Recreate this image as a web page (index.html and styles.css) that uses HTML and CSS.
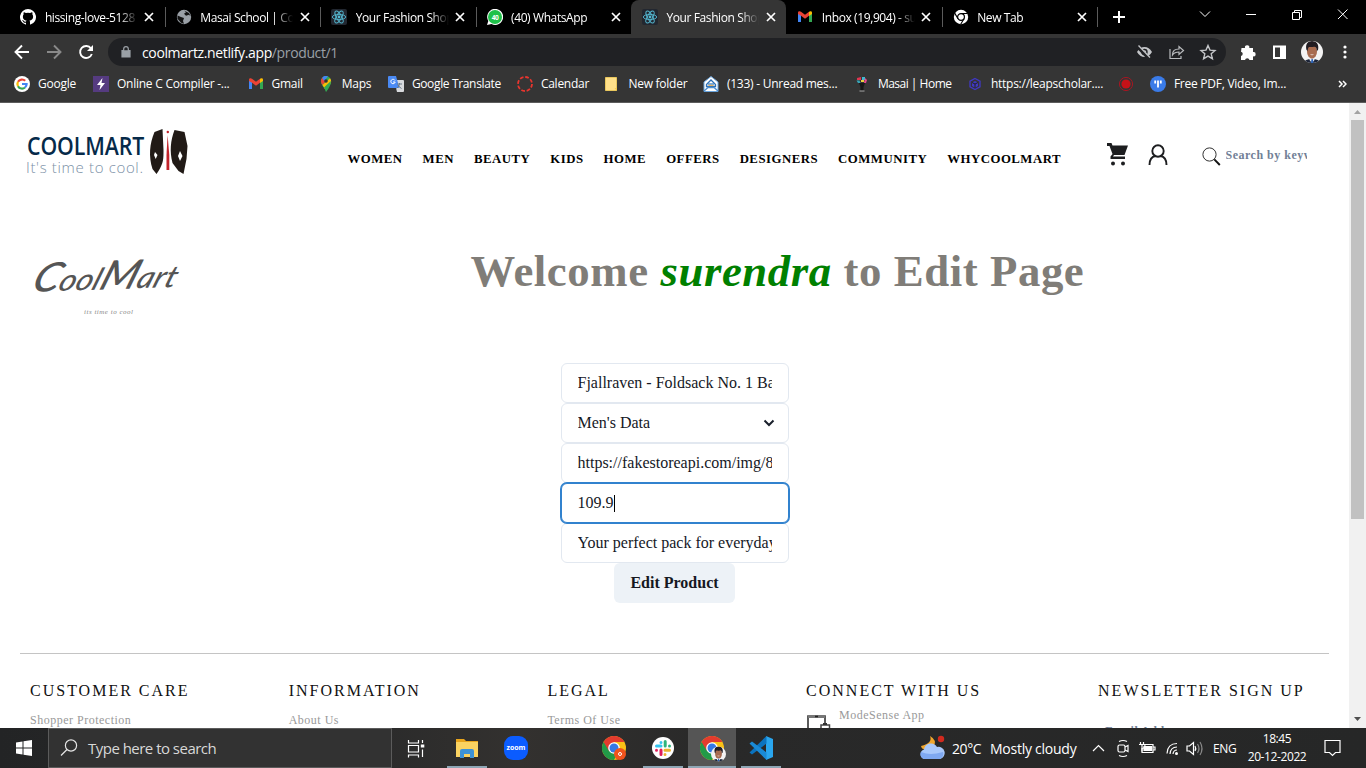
FILE: index.html
```html
<!DOCTYPE html>
<html lang="en">
<head>
<meta charset="utf-8">
<title>Your Fashion Shop</title>
<link rel="stylesheet" href="styles.css">
</head>
<body>
<svg class="defs" width="0" height="0">
  <symbol id="x" viewBox="0 0 10 10"><path d="M1 1l8 8M9 1L1 9" fill="none" stroke="#fff" stroke-width="1.7"/></symbol>
  <symbol id="react" viewBox="0 0 16 16"><rect width="16" height="16" rx="2" fill="#222730"/><g fill="none" stroke="#55b9d2" stroke-width=".9"><ellipse cx="8" cy="8" rx="6.7" ry="2.6"/><ellipse cx="8" cy="8" rx="6.7" ry="2.6" transform="rotate(60 8 8)"/><ellipse cx="8" cy="8" rx="6.7" ry="2.6" transform="rotate(120 8 8)"/></g><circle cx="8" cy="8" r="1.4" fill="#55b9d2"/></symbol>
  <symbol id="gmail" viewBox="0 0 16 16"><path d="M1 3.5V13h3V6z" fill="#4285f4"/><path d="M15 3.5V13h-3V6z" fill="#34a853"/><path d="M1 5V3.7C1 2 3 1.8 4 2.7l4 3 4-3v4L8 9.8 4 6.7 1 5z" fill="#ea4335"/><path d="M12 2.7c1-.9 3-.7 3 1V5l-3 2z" fill="#fbbc04"/></symbol>
  <symbol id="chrome" viewBox="0 0 24 24"><circle cx="12" cy="12" r="12" fill="#fbc116"/><path d="M12 12L1.6 6A12 12 0 0 0 12 24l5-9z" fill="#229a48"/><path d="M1.6 6A12 12 0 0 1 22.4 6H12L7 15z" fill="#e33b2e"/><circle cx="12" cy="12" r="5.8" fill="#fff"/><circle cx="12" cy="12" r="4.5" fill="#3578e5"/></symbol>
  <symbol id="face" viewBox="0 0 22 22"><clipPath id="fc"><circle cx="11" cy="11" r="11"/></clipPath><g clip-path="url(#fc)"><rect width="22" height="22" fill="#f4f3f3"/><path d="M2 22q2-4 9-4t9 4z" fill="#1c2438"/><path d="M8.500 15h5v4l-2.500 3-2.500-3z" fill="#e9eef5"/><ellipse cx="11" cy="10.500" rx="5" ry="7.200" fill="#a86b4f"/><path d="M5.500 9C4 3 7 0 11 0s7.500 3 6 9l-1.200 1c0-3-1-4.500-2.800-4.300-2.500.8-4.200 0-5 .3-1 1-1.200 2-1.200 4z" fill="#211c22"/><path d="M9 13.500q2 1.500 4 0" fill="#fff"/><path d="M10.500 18h1.300l.6 4h-2.500z" fill="#2b62b5"/></g></symbol>
</svg>

<header class="tabs">
  <div class="tab"><svg class="fav" viewBox="0 0 16 16"><path fill="#fff" d="M8 0a8 8 0 0 0-2.500 15.600c.4.1.5-.2.500-.4V13.700c-2.200.5-2.700-1-2.700-1-.4-.9-.9-1.200-.9-1.200-.7-.5.100-.5.100-.5.800.1 1.200.8 1.200.8.7 1.300 1.900.9 2.300.7.100-.5.300-.9.500-1.100-1.800-.2-3.600-.9-3.600-4 0-.9.300-1.600.8-2.100-.1-.2-.4-1 .1-2.100 0 0 .7-.2 2.200.8a7.500 7.500 0 0 1 4 0c1.500-1 2.200-.8 2.200-.8.500 1.100.2 1.900.1 2.100.5.500.8 1.200.8 2.100 0 3.100-1.900 3.800-3.700 4 .3.300.6.800.6 1.500v2.300c0 .2.100.5.500.4A8 8 0 0 0 8 0z"/></svg><span class="tt">hissing-love-5128</span><svg class="tx"><use href="#x"/></svg></div>
  <div class="tab"><svg class="fav" viewBox="0 0 16 16"><circle cx="8" cy="8" r="7.200" fill="#9aa0a6"/><path d="M1.500 6.500L5 8l3 1-1 3 1 2.800-3-1-3.500-4zM8 1.500l2 1.700-2 1.500 2 2 3-1 1.600 1.500L13 4z" fill="#111"/></svg><span class="tt">Masai School | Coo</span><svg class="tx"><use href="#x"/></svg></div>
  <div class="tab"><svg class="fav"><use href="#react"/></svg><span class="tt">Your Fashion Shop</span><svg class="tx"><use href="#x"/></svg></div>
  <div class="tab nosep"><svg class="fav" viewBox="0 0 16 16"><path d="M0 16l1.300-4A8 8 0 1 1 4.500 15z" fill="#fff"/><circle cx="8" cy="8" r="7" fill="#1fc14a"/><text x="8" y="10.700" text-anchor="middle" class="wa">40</text></svg><span class="tt">(40) WhatsApp</span><svg class="tx"><use href="#x"/></svg></div>
  <div class="tab active"><svg class="fav"><use href="#react"/></svg><span class="tt">Your Fashion Shop</span><svg class="tx"><use href="#x"/></svg></div>
  <div class="tab"><svg class="fav"><use href="#gmail"/></svg><span class="tt">Inbox (19,904) - su</span><svg class="tx"><use href="#x"/></svg></div>
  <div class="tab"><svg class="fav" viewBox="0 0 16 16"><circle cx="8" cy="8" r="7.200" fill="#fff"/><circle cx="8" cy="8" r="3.400" fill="none" stroke="#000" stroke-width="1.200"/><path d="M8 4.500h6.600M5 9.700L1.700 4.100M11 9.800l-3.300 5.500" stroke="#000" stroke-width="1.100"/></svg><span class="tt">New Tab</span><svg class="tx"><use href="#x"/></svg></div>
  <svg class="plus" viewBox="0 0 12 12"><path d="M6 0v12M0 6h12" stroke="#fff" stroke-width="2"/></svg>
  <svg class="winctl" width="150" height="20" viewBox="0 0 150 20"><g fill="none" stroke="#fff"><path d="M4 7.500l5 5 5-5M50 10.500h10M96.500 8.500h7v7h-7zM98.500 8.500v-2h7v7h-2M142 5.500l9.500 9.500M151.500 5.500L142 15" /></g></svg>
</header>

<div class="toolbar">
  <svg class="navs" width="94" height="28" viewBox="0 0 94 28"><g fill="none" stroke="#fff" stroke-width="1.900"><path d="M29 14H16M22 7.500L15.500 14l6.500 6.500"/><path d="M47 14h13M54 7.500l6.500 6.500-6.500 6.500" stroke="#8a8a8a"/><path d="M91 10.500A6 6 0 1 0 91.800 16"/></g><path d="M93 7v6h-6z" fill="#fff"/></svg>
  <div class="omni">
    <svg width="10" height="12" viewBox="0 0 10 12"><path d="M1 4.500h8V11H1zM2.700 5V3a2.300 2.300 0 0 1 4.600 0v2" fill="#9aa0a6" stroke="#9aa0a6" stroke-width="1.200"/><path d="M3.300 4.300V3a1.700 1.700 0 0 1 3.400 0v1.300" fill="#202124"/></svg>
    <span class="url">coolmartz.netlify.app<i>/product/1</i></span>
    <svg class="omico" width="84" height="18" viewBox="0 0 84 18"><path d="M2 9q3-5 7.500-5T17 9q-3 5-7.500 5T2 9z" fill="#c4c6c9"/><circle cx="9.500" cy="9" r="3.200" fill="#202124"/><circle cx="9.500" cy="9" r="1.700" fill="#c4c6c9"/><path d="M2.500 3.500L14 15.500" stroke="#202124" stroke-width="3.500"/><path d="M3.500 2.500L15 14.500" stroke="#c4c6c9" stroke-width="1.300"/><g fill="none" stroke="#b9bbbe" stroke-width="1.200"><path d="M35 6v9.500h11V13"/><path d="M37.500 12q0-6 6.500-6V3.500l4.500 4-4.500 4V9q-4.500 0-6.500 3z"/></g><path d="M73 2.500l2 4.600 5 .4-3.800 3.300 1.200 4.900-4.400-2.600-4.400 2.600 1.200-4.900L66 7.500l5-.4z" fill="none" stroke="#c4c6c9" stroke-width="1.400"/></svg>
  </div>
  <svg width="44" height="18" viewBox="0 0 44 18" class="exts"><path d="M1.500 5H5a2.200 2.200 0 1 1 4.300 0H13v4a2.200 2.200 0 1 1 0 4.300V17H9.500a2.300 2.300 0 0 0-4.500 0H1v-4a2.200 2.200 0 0 0 0-4.300z" fill="#fff"/><path d="M34 3.500h11v11.500H34z" fill="none" stroke="#fff" stroke-width="2"/><path d="M40 3h5v12h-5z" fill="#fff"/></svg>
  <svg class="ava"><use href="#face"/></svg>
  <svg class="dots" width="4" height="14" viewBox="0 0 4 14"><g fill="#fff"><circle cx="2" cy="2" r="1.600"/><circle cx="2" cy="7" r="1.600"/><circle cx="2" cy="12" r="1.600"/></g></svg>
</div>

<div class="marks">
  <a class="w79"><svg viewBox="0 0 16 16"><circle cx="8" cy="8" r="8" fill="#fff"/><g fill="none" stroke-width="2.200"><path d="M11.200 4.800A4.600 4.600 0 0 0 4 5.800" stroke="#ea4335"/><path d="M4 5.800a4.600 4.600 0 0 0 0 4.400" stroke="#fbbc04"/><path d="M4 10.200a4.600 4.600 0 0 0 7 1.300" stroke="#34a853"/><path d="M11 11.500A4.600 4.600 0 0 0 12.600 8H8" stroke="#4285f4"/></g></svg>Google</a>
  <a class="w155"><svg viewBox="0 0 16 16"><rect width="16" height="16" fill="#553b80"/><path d="M9.500 2L4 9h3.500l-1 5L12 7H8.500z" fill="#fff"/></svg>Online C Compiler -...</a>
  <a class="w70"><svg><use href="#gmail"/></svg>Gmail</a>
  <a class="w70"><svg viewBox="0 0 16 16"><path d="M8 16C7.500 12 3 10 3 5a5 5 0 0 1 10 0c0 5-4.500 7-5 11z" fill="#34a853"/><path d="M3 5.500A5 5 0 0 1 4.200 1.700L8 5 4.500 9A6 6 0 0 1 3 5.500z" fill="#ea4335"/><path d="M4.200 1.700A5 5 0 0 1 10 .4L6 5z" fill="#4285f4"/><path d="M4.500 9L12 2.200a5 5 0 0 1 0 6L7 13z" fill="#fbbc04"/><path d="M8.500 9L13 5q0 5-5 11-.5-2.500-2-4.500z" fill="#34a853"/><circle cx="8" cy="5" r="1.800" fill="#333"/></svg>Maps</a>
  <a class="w129 tight"><svg viewBox="0 0 16 16"><path d="M6 4h9q1 0 1 1v10q0 1-1 1H9z" fill="#d8dadd"/><path d="M1 0h7l3.500 12H1q-1 0-1-1V1q0-1 1-1z" fill="#4a8af4"/><path d="M9 8h5M11.500 7v1q0 2-3 4.500M10 9q1 2 3.500 3.500" stroke="#6b7b88" fill="none"/><path d="M7 4.500A2.200 2.200 0 1 0 7.200 6H5" stroke="#fff" fill="none"/></svg>Google Translate</a>
  <a class="w88"><svg viewBox="0 0 16 16"><circle cx="8" cy="8" r="7" fill="none" stroke="#e8352e" stroke-width="1.800" stroke-dasharray="3.700 1.800"/></svg>Calendar</a>
  <a class="w98"><svg viewBox="0 0 16 16"><path d="M1.500 1.500h11v13h-11z" fill="#ffe08a" stroke="#e9c75d"/><path d="M10.500 12h2.500v3" fill="#f6c84c"/></svg>New folder</a>
  <a class="w151"><svg viewBox="0 0 16 16"><path d="M1 6l7-5.500L15 6v9.500H1z" fill="#fff" stroke="#6aa4dc"/><path d="M3.500 8.500L8 4l4.500 4.500v2h-9z" fill="#fff" stroke="#2d6fb5" stroke-width="1.300"/><path d="M5 8h6M1 15l4-3.500h6L15 15" stroke="#4c8ed0" fill="none" stroke-width="1.300"/><path d="M5.500 9.300h5" stroke="#eda63b"/></svg>(133) - Unread mes...</a>
  <a class="w113 tighter"><svg viewBox="0 0 16 16"><path d="M5 7h6l-1.500 4v4h-3v-4z" fill="#171717"/><path d="M3 2l4-1v3H3z" fill="#df3550"/><path d="M8 1h3v3H8z" fill="#42b6cf"/><path d="M11 2l2 2-1 3h-2z" fill="#e4488a"/><path d="M2.500 4.500h3l1 2.500H4z" fill="#37a6b8"/><path d="M7 4h3v2H7z" fill="#e8d33e"/><path d="M5.500 15h5" stroke="#aaa"/></svg>Masai | Home</a>
  <a class="w151"><svg viewBox="0 0 16 16"><path d="M8 2.500l5 2.700v5.600L8 13.500l-5-2.700V5.200z" fill="none" stroke="#4038c4" stroke-width="1.300"/><path d="M8 5l3 1.500v3.500L8 11.800 5 10V6.500z" fill="#4038c4"/><path d="M8 8l3-1.500M8 8L5 6.500M8 8v4" stroke="#222"/></svg>https://leapscholar....</a>
  <a class="w32"><svg viewBox="0 0 16 16"><circle cx="8" cy="8" r="6.600" fill="none" stroke="#a51622"/><circle cx="8" cy="8" r="4.600" fill="#c61118"/></svg></a>
  <a class="w187"><svg viewBox="0 0 16 16"><circle cx="8" cy="8" r="8" fill="#3a7be8"/><path d="M5.200 4.500v3M10.800 4.500v3M8 4.500v7" stroke="#fff" stroke-width="1.800"/></svg>Free PDF, Video, Im...</a>
  <svg class="more" viewBox="0 0 9 8"><path d="M1 1l3 3-3 3M5 1l3 3-3 3" fill="none" stroke="#fff" stroke-width="1.500"/></svg>
</div>

<main class="view">
  <div class="page">
    <nav class="nav">
      <svg class="logo" width="164" height="50" viewBox="0 0 164 50"><text class="brand" transform="translate(2 27.500) scale(.82 1)" textLength="143">COOLMART</text><text class="tag" x="1" y="46" textLength="117">It's time to cool.</text><path d="M137.500 2l-8 3c-5 12-6 24-2 37l4 5 2-3c5-8 5-12 5-21zM149.500 3l10 2 3 14-1 13-3 15-5-3-6-8c-3-12-2-22 2-33z" fill="#211a16"/><path d="M130 25l2.500 3-1.800 4-1.700-4zM155 24l2.500 5-2.500 5-2-5z" fill="#fff"/><path d="M142.600 8l-1.100 20v15h2.800V28z" fill="#c2232a"/><circle cx="142.800" cy="5" r="1.200" fill="#c2232a"/></svg>
      <div class="links"><a>WOMEN</a><a>MEN</a><a>BEAUTY</a><a>KIDS</a><a>HOME</a><a>OFFERS</a><a>DESIGNERS</a><a>COMMUNITY</a><a>WHYCOOLMART</a></div>
      <svg class="cart" width="22" height="23" viewBox="0 0 22 23"><path d="M0 0h4.500l1 2.500H21L17.500 12H7l-1 1.500h12V16H3.500v-2.500L5.500 11 2.500 3H0z" fill="#1d1e20"/><circle cx="6" cy="20.500" r="2" fill="#1d1e20"/><circle cx="16" cy="20.500" r="2" fill="#1d1e20"/></svg>
      <svg class="user" width="20" height="22" viewBox="0 0 20 22"><g fill="none" stroke="#1d1e20" stroke-width="1.900"><circle cx="10" cy="7" r="5.700"/><path d="M1.500 21q0-8 6-9M18.500 21q0-8-6-9"/></g></svg>
      <svg class="mag" width="19" height="19" viewBox="0 0 19 19"><circle cx="7.500" cy="7.500" r="6.600" fill="none" stroke="#333"/><path d="M12.300 12.300l5.500 5.700" stroke="#111" stroke-width="1.900"/></svg>
      <div class="search">Search by keyword</div>
    </nav>
    <section class="hero">
      <svg width="160" height="70" viewBox="0 0 160 70"><text class="script" transform="translate(5 38) rotate(-2) skewX(-22)" textLength="144" lengthAdjust="spacingAndGlyphs"><tspan class="cap">C</tspan>ool<tspan class="cap">M</tspan>art</text><text class="mini" x="59" y="60" textLength="49">its time to cool</text></svg>
      <h1>Welcome <em>surendra</em> to Edit Page</h1>
    </section>
    <form class="form">
      <div class="field"><span>Fjallraven - Foldsack No. 1 Backpack</span></div>
      <div class="field"><span>Men's Data</span><svg width="12" height="8" viewBox="0 0 12 8"><path d="M1.500 1.500L6 6l4.500-4.500" fill="none" stroke="#1a202c" stroke-width="2"/></svg></div>
      <div class="field"><span>https://fakestoreapi.com/img/81fPKd</span></div>
      <div class="field focus"><span>109.9</span><b class="caret"></b></div>
      <div class="field"><span>Your perfect pack for everyday use</span></div>
      <div class="btn">Edit Product</div>
    </form>
    <footer class="foot">
      <div class="c1"><h2>CUSTOMER CARE</h2><p>Shopper Protection</p></div>
      <div class="c1"><h2>INFORMATION</h2><p>About Us</p></div>
      <div class="c1"><h2>LEGAL</h2><p>Terms Of Use</p></div>
      <div class="c4"><h2>CONNECT WITH US</h2><div class="app"><svg width="25" height="28" viewBox="0 0 25 28"><path d="M2 27V2h17v8" fill="none" stroke="#333" stroke-width="1.600"/><path d="M2 2.500h17" stroke="#777" stroke-width="3"/><path d="M9 2.500h3" stroke="#222" stroke-width="1.600"/><path d="M15 27V11h8.500v16" fill="none" stroke="#444" stroke-width="1.500"/><path d="M17 10h4" stroke="#333" stroke-width="2"/></svg><p>ModeSense App</p></div></div>
      <div class="c5"><h2>NEWSLETTER SIGN UP</h2><div class="mail">Email Address</div></div>
    </footer>
  </div>
  <div class="bar"><svg viewBox="0 0 17 17"><path d="M5 11l3.500-4 3.500 4z" fill="#a3a3a3"/></svg><div class="thumb"></div><svg viewBox="0 0 17 17"><path d="M5 6l3.500 4L12 6z" fill="#505050"/></svg></div>
</main>

<div class="task">
  <svg class="start" width="48" height="40" viewBox="0 0 48 40"><path d="M16 14.500l6.500-1v6H16zM23.500 13.300l8.500-1.300v7.500h-8.500zM16 20.500h6.500v6l-6.500-1zM23.500 20.500H32V28l-8.500-1.300z" fill="#fff"/></svg>
  <div class="find"><svg width="18" height="18" viewBox="0 0 18 18"><circle cx="11" cy="6.500" r="5.600" fill="none" stroke="#e5e5e5" stroke-width="1.200"/><path d="M7 10.500L1 16.500" stroke="#e5e5e5" stroke-width="1.300"/></svg>Type here to search</div>
  <svg class="tv" width="48" height="40" viewBox="0 0 48 40"><g fill="none" stroke="#fff" stroke-width="1.200"><path d="M16.500 12v3h10v-3M16.500 17.500h10v6.500h-10zM16.500 29.500V27h10v2.500M30.500 12v3M30.500 21.500V29"/><path d="M28.800 18h3.500" stroke-width="3"/></g></svg>
  <div class="app2 on a1"><svg viewBox="0 0 24 24"><path d="M1 3h8l2 2h12v16H1z" fill="#e9a51c"/><path d="M1 6h22v15H1z" fill="#fbd361"/><path d="M5 22v-7q0-2 2-2h10q2 0 2 2v7h-4v-4H9v4z" fill="#3d92d6"/></svg></div>
  <div class="app2 a2"><svg viewBox="0 0 24 24"><rect width="24" height="24" rx="9" fill="#0b5cff"/><text x="12" y="14" text-anchor="middle" class="zoom">zoom</text></svg></div>
  <div class="app2 a3"><svg viewBox="0 0 24 24"><use href="#chrome"/><circle cx="18" cy="18" r="6" fill="#f0531d"/><circle cx="18" cy="18" r="1.500" fill="none" stroke="#fff"/></svg></div>
  <div class="app2 on a4"><svg viewBox="0 0 24 24"><circle cx="12" cy="12" r="11" fill="#fff"/><g stroke-width="3" stroke-linecap="round"><path d="M10 6.500v0M5.500 10H10" stroke="#36c5f0"/><path d="M14.200 5.500V10M18.500 10h0" stroke="#2eb67d"/><path d="M14 14.200h4.500M14 18.500v0" stroke="#ecb22e"/><path d="M10 14v4.500M5.500 14.200h0" stroke="#e01e5a"/></g></svg></div>
  <div class="app2 on a5"><svg viewBox="0 0 24 24" overflow="visible"><use href="#chrome"/><use href="#face" x="11" y="10" width="15" height="16"/></svg></div>
  <div class="app2 on a6"><svg viewBox="0 0 24 24"><path d="M17 0l7 3v18l-7 3z" fill="#2aa6ee"/><path d="M17.500 0v7.500L3 18.500.5 16.500z" fill="#0b73bf"/><path d="M17.500 24v-7.500L3 5.500.5 7.500z" fill="#1a8ad6"/></svg></div>
  <svg class="wx" width="26" height="26" viewBox="0 0 26 26"><path d="M11 1q3 7-9 10 1 4 5 3l8-3q3-6-4-10z" fill="#f1a72d"/><circle cx="22" cy="4" r="3.200" fill="#d12a1e"/><path d="M5 24a5 5 0 0 1 0-9.500 7 7 0 0 1 13-2.500 5.500 5.500 0 0 1 3 12z" fill="#a9c8fa"/><path d="M5 24a5 5 0 0 1-3-7q5 2 10 2t12-2a5.500 5.500 0 0 1-3 7z" fill="#7fa8f0"/></svg>
  <span class="deg">20°C</span><span class="cloud">Mostly cloudy</span>
  <svg class="tray" width="114" height="24" viewBox="0 0 114 24"><g fill="none" stroke="#fff" stroke-width="1.200"><path d="M1 15l5.500-5.500L12 15"/><rect x="26" y="9" width="7" height="7" rx="1.500"/><path d="M33 11l3-1.500v6L33 14M27 5.500q4-2 8 0M27 19.500q4 2 8 0"/><path d="M50 8.500h11v8H50z"/><path d="M52 10.500h7.500v4H52z" fill="#fff"/><path d="M61 11h2v3h-2M48.500 9V6M51.500 9V6M47 8.500h6q0 4-3 4v3"/><path d="M75 17.500q.5-10 10-10M78 18q.5-7 7-7M81 18q.5-4 4-4"/><path d="M95 10h2.500l4-3.500v12l-4-3.500H95z"/><path d="M103 10q1.500 2.500 0 5"/><path d="M105.500 8q3 4.500 0 9M108 6q4 6.500 0 13" stroke="#888"/></g><circle cx="84.500" cy="17.500" r="1.500" fill="#fff"/></svg>
  <span class="eng">ENG</span>
  <div class="clock"><span>18:45</span><span>20-12-2022</span></div>
  <svg class="note" width="18" height="18" viewBox="0 0 18 18"><path d="M1 1.500h15v12h-4.500l-3 3-3-3H1z" fill="none" stroke="#fff" stroke-width="1.200"/></svg>
</div>
</body>
</html>
```
FILE: styles.css
```css
* { box-sizing: border-box; }
body { margin: 0; width: 1366px; height: 768px; overflow: hidden; display: flex; flex-direction: column; background: #fff; font-family: "Open Sans", "Noto Sans", sans-serif; font-size: 12px; color: #fff; }
svg { flex: none; display: block; }
.defs { position: absolute; }
h1, h2, p { margin: 0; }

.tabs { height: 34px; flex: none; background: #000; display: flex; align-items: center; padding-left: 9.400px; }
.tab { width: 155.400px; height: 34px; flex: none; display: flex; align-items: center; padding-left: 11px; position: relative; letter-spacing: -.4px; }
.tab::after { content: ""; position: absolute; right: -1px; top: 7px; width: 1px; height: 20px; background: #5b5b5b; }
.tab.nosep::after, .tab.active::after { display: none; }
.tab.active { background: #353535; border-radius: 8px 8px 0 0; }
.fav { width: 16px; height: 16px; }
.tt { margin-left: 8.500px; width: 93px; overflow: hidden; white-space: nowrap; -webkit-mask-image: linear-gradient(90deg, #000 80%, transparent 100%); mask-image: linear-gradient(90deg, #000 80%, transparent 100%); }
.tx { width: 10px; height: 10px; margin-left: 6.500px; }
.wa { font: bold 6.500px "Open Sans"; fill: #fff; }
.plus { width: 12px; height: 12px; margin-left: 15.600px; }
.winctl { margin-left: 71px; margin-top: -6px; overflow: visible; }

.toolbar { height: 36px; flex: none; background: #353535; display: flex; align-items: center; }
.omni { margin-left: 14px; width: 1118px; height: 28px; border-radius: 14px; background: #202124; display: flex; align-items: center; padding-left: 13px; }
.url { margin-left: 11px; font-size: 14px; letter-spacing: -.37px; flex: 1; }
.url i { font-style: normal; color: #9aa0a6; }
.omico { margin-right: 7.500px; }
.exts { margin-left: 14px; overflow: visible; }
.ava { width: 22px; height: 22px; margin-left: 17px; }
.dots { margin-left: 20px; }

.marks { height: 33px; flex: none; background: #353535; border-bottom: 1px solid #5c5c5c; display: flex; align-items: center; padding: 0 0 5px 14px; }
.marks a { display: flex; align-items: center; gap: 8px; flex: none; white-space: nowrap; letter-spacing: -.25px; }
.marks a.tight { letter-spacing: -.35px; }
.marks a.tighter { letter-spacing: -.5px; }
.marks a svg { width: 16px; height: 16px; }
.w79 { width: 79px; } .w155 { width: 154.500px; } .w70 { width: 70.200px; } .w129 { width: 129px; }
.w88 { width: 87.500px; } .w98 { width: 98.500px; } .w151 { width: 151px; } .w113 { width: 113px; }
.w32 { width: 32px; } .w187 { width: 188.500px; }
.marks .more { width: 9px; height: 8px; }

.view { height: 625px; flex: none; display: flex; overflow: hidden; font-family: "Liberation Serif", serif; color: #15181f; }
.page { width: 1349px; }
.bar { width: 17px; background: #f1f1f1; display: flex; flex-direction: column; align-items: center; }
.bar svg { width: 17px; height: 17px; }
.thumb { width: 13px; height: 399px; background: #c1c1c1; margin-bottom: auto; }

.nav { height: 104px; display: flex; align-items: center; padding-left: 25px; }
.logo { margin-top: -6px; }
.brand { font: 600 26px "Open Sans", sans-serif; fill: #062a49; }
.tag { font: 300 15px "Open Sans", sans-serif; fill: #7b90a6; }
.links { display: flex; gap: 20px; margin: 8px 0 0 158.500px; font-size: 12.800px; font-weight: bold; letter-spacing: .5px; color: #000; width: 759px; flex: none; }
.cart { margin-top: -1px; }
.user { margin: 0 0 0 19px; }
.mag { margin: 3px 0 0 34px; }
.search { margin: 1px 0 0 5px; width: 81px; overflow: hidden; white-space: nowrap; font-size: 12px; font-weight: bold; letter-spacing: .5px; color: #718096; }

.hero { display: flex; padding: 47px 0 0 25px; height: 156px; }
.script { font: italic 500 30px Lato, cursive; fill: #555; }
.cap { font-size: 40px; }
.mini { font: italic 7px "Liberation Serif", serif; fill: #888; }
h1 { margin-left: 285.500px; margin-top: -10px; font-size: 44.800px; line-height: 54px; letter-spacing: .57px; color: #807d78; white-space: nowrap; }
em { color: green; }

.form { width: 228px; margin-left: 561px; display: flex; flex-direction: column; align-items: center; font-size: 16px; }
.field { width: 228px; height: 40px; border: 1px solid #e2e8f0; border-radius: 6px; padding: 0 16px 0 15.500px; display: flex; align-items: center; }
.field span { overflow: hidden; white-space: nowrap; }
.field svg { margin-left: auto; margin-right: -3px; }
.focus { border-color: #3182ce; box-shadow: 0 0 0 1px #3182ce; position: relative; background: #fff; }
.caret { width: 1px; height: 17px; background: #000; }
.btn { width: 121px; height: 40px; margin-right: 1px; border-radius: 6px; background: #edf2f7; font-weight: bold; display: flex; align-items: center; justify-content: center; }

.foot { margin: 50px 20px 0; border-top: 1px solid #c4c4c4; padding: 28px 0 0 10px; display: flex; }
.foot > div { flex: none; white-space: nowrap; }
.c1 { width: 258.700px; } .c4 { width: 292px; }
h2 { font-size: 16px; line-height: 18px; font-weight: normal; letter-spacing: 2px; color: #111; }
.foot p { font-size: 12px; line-height: 14px; letter-spacing: .5px; color: #999; margin-top: 13px; }
.app { display: flex; padding-top: 14px; }
.foot .app p { margin: -6px 0 0 8px; }
.mail { font-size: 12px; line-height: 14px; font-weight: bold; letter-spacing: .5px; color: #718096; padding: 24px 0 0 7px; }

.task { height: 40px; flex: none; display: flex; align-items: center; background: linear-gradient(90deg, #232425 0, #2b2b2b 28%, #33312f 38%, #292929 52%, #262727 100%); white-space: nowrap; overflow: hidden; }
.find { width: 344px; height: 40px; background: #323232; border: 1px solid #5b5b5b; display: flex; align-items: center; padding-left: 11px; gap: 10px; font-size: 15px; letter-spacing: -.52px; color: #d8d8d8; flex: none; }
.app2 { height: 40px; width: 40px; flex: none; display: flex; align-items: center; justify-content: center; }
.app2 svg { width: 24px; height: 24px; }
.on { border-bottom: 2px solid #8ea6b5; padding-top: 2px; }
.a1 { margin-left: 7px; } .a2 { margin-left: 9px; } .a3 { margin-left: 58px; } .a4 { margin-left: 9px; }
.a5 { margin-left: 5px; width: 48px; background: #555; } .a6 { margin-left: 5px; }
.zoom { font: bold 7px "Open Sans"; fill: #fff; }
.wx { margin-left: 138px; }
.deg { font-size: 14px; letter-spacing: -.4px; width: 38px; margin-left: 7px; }
.cloud { font-size: 14px; letter-spacing: -.25px; width: 103px; }
.tray { flex: none; margin-left: -1px; }
.eng { margin-left: 7px; width: 24px; letter-spacing: -.4px; }
.clock { width: 60px; margin-left: 10px; display: flex; flex-direction: column; align-items: center; line-height: 18px; letter-spacing: -.4px; }
.note { margin-left: 17px; }
```
